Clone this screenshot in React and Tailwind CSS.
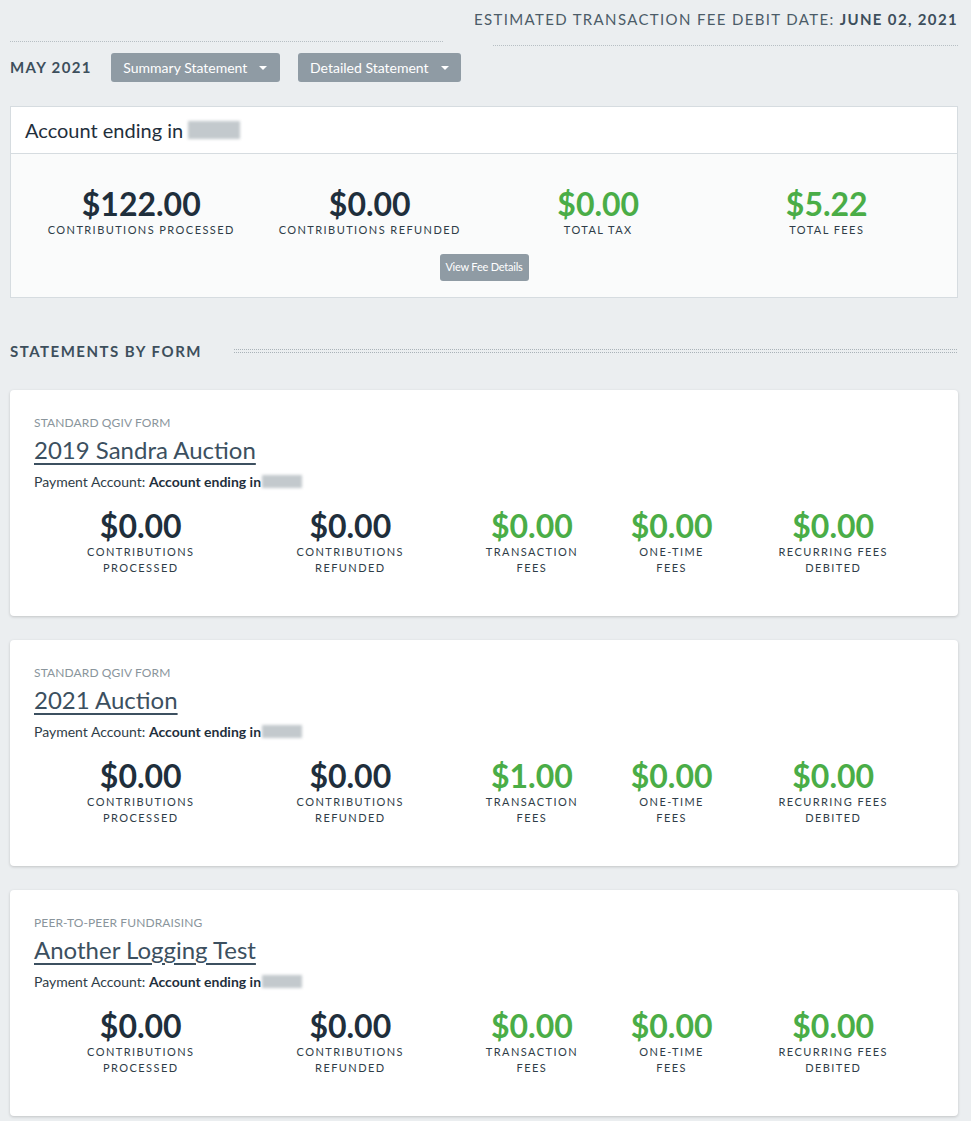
import React from "react";

const forms = [
  {
    type: "STANDARD QGIV FORM",
    title: "2019 Sandra Auction",
    stats: ["$0.00", "$0.00", "$0.00", "$0.00", "$0.00"],
  },
  {
    type: "STANDARD QGIV FORM",
    title: "2021 Auction",
    stats: ["$0.00", "$0.00", "$1.00", "$0.00", "$0.00"],
  },
  {
    type: "PEER-TO-PEER FUNDRAISING",
    title: "Another Logging Test",
    stats: ["$0.00", "$0.00", "$0.00", "$0.00", "$0.00"],
  },
];

const formCols = [
  { w: "w-[214px]", l1: "CONTRIBUTIONS", l2: "PROCESSED", green: false },
  { w: "w-[206px]", l1: "CONTRIBUTIONS", l2: "REFUNDED", green: false },
  { w: "w-[158px]", l1: "TRANSACTION", l2: "FEES", green: true },
  { w: "w-[122px]", l1: "ONE-TIME", l2: "FEES", green: true },
  { w: "w-[202px]", l1: "RECURRING FEES", l2: "DEBITED", green: true },
];

function Caret() {
  return <span className="ml-3 inline-block border-x-[4px] border-t-[4px] border-x-transparent border-t-white" />;
}

function Blur({ className }) {
  return <span className={"inline-block bg-[#c3c9cd] blur-[1.5px] " + className} />;
}

export default function App() {
  return (
    <div className="min-h-[1121px] bg-[#ebeef0] pl-[10px] pr-[13px] pb-2 text-[#2f3d48]" style={{ fontFamily: "Lato, 'Open Sans', sans-serif" }}>
      {/* top header */}
      <div className="flex items-end justify-between pt-[9px]">
        <div className="mb-[4px] w-[433px] border-t border-dotted border-[#b7bfc4]" />
        <div className="flex flex-col items-end">
          <div className="whitespace-nowrap text-[15px] leading-[20px] tracking-[0.09em] text-[#4b5c68]">
            ESTIMATED TRANSACTION FEE DEBIT DATE: <span className="font-bold text-[#3d4f5c]">JUNE 02, 2021</span>
          </div>
          <div className="mt-[16px] w-[465px] border-t border-dotted border-[#b7bfc4]" />
        </div>
      </div>

      <div className="mt-[7px] flex items-center">
        <span className="text-[15px] font-bold tracking-[0.09em] text-[#3d4f5c]">MAY 2021</span>
        <button className="ml-[19px] flex h-[29px] w-[169px] items-center justify-center rounded-[3px] bg-[#8f9ba4] text-[14px] text-white">
          Summary Statement <Caret />
        </button>
        <button className="ml-[18px] flex h-[29px] w-[163px] items-center justify-center rounded-[3px] bg-[#8f9ba4] text-[14px] text-white">
          Detailed Statement <Caret />
        </button>
      </div>

      {/* account card */}
      <div className="mt-[24px] border border-[#d6dce0] bg-[#fafbfb]">
        <div className="flex h-[47px] items-center border-b border-[#d6dce0] bg-white px-[14px] text-[20px] text-[#1f2f3c]">
          Account ending in <Blur className="ml-[5px] h-[18px] w-[52px]" />
        </div>
        <div className="px-[16px] pt-[32px] pb-[16px]">
          <div className="grid grid-cols-4">
            {[
              ["$122.00", "CONTRIBUTIONS PROCESSED", false],
              ["$0.00", "CONTRIBUTIONS REFUNDED", false],
              ["$0.00", "TOTAL TAX", true],
              ["$5.22", "TOTAL FEES", true],
            ].map(([v, l, g]) => (
              <div key={l} className="flex flex-col items-center">
                <div className={"text-[32px] font-bold leading-[36px] " + (g ? "text-[#4aad47]" : "text-[#1f2f3c]")}>{v}</div>
                <div className="mt-[1px] text-[11px] leading-[14px] tracking-[0.13em] text-[#2f3d48]">{l}</div>
              </div>
            ))}
          </div>
          <div className="mt-[17px] flex justify-center">
            <button className="h-[27px] w-[89px] rounded-[3px] bg-[#8f9ba4] text-[11px] tracking-[-0.02em] text-white">View Fee Details</button>
          </div>
        </div>
      </div>

      {/* statements by form */}
      <div className="mt-[42px] flex items-center">
        <span className="text-[15px] font-bold tracking-[0.1em] text-[#3d4f5c]">STATEMENTS BY FORM</span>
        <div className="ml-[32px] mr-[1px] h-[4px] flex-1 border-y border-dotted border-[#a9b2b8]" />
      </div>

      <div className="mt-[27px] flex flex-col gap-[24px]">
        {forms.map((f) => (
          <div key={f.title} className="h-[226px] rounded-[4px] bg-white px-[24px] pt-[26px] shadow-[0_1px_3px_rgba(0,0,0,0.18)]">
            <div className="text-[12px] leading-[14px] tracking-[0.01em] text-[#8a959c]">{f.type}</div>
            <div className="mt-[6px] text-[24px] leading-[28px] text-[#3c5060] underline decoration-[2px] underline-offset-[4px]">{f.title}</div>
            <div className="mt-[10px] flex items-center text-[14px] leading-[16px] text-[#2f3d48]">
              Payment Account:&nbsp;<span className="font-bold text-[#1f2f3c]">Account ending in</span>
              <Blur className="ml-[1px] h-[13px] w-[40px]" />
            </div>
            <div className="mt-[18px] flex">
              {formCols.map((c, i) => (
                <div key={i} className={"flex flex-col items-center " + c.w}>
                  <div className={"text-[32px] font-bold leading-[36px] " + (c.green ? "text-[#4aad47]" : "text-[#1f2f3c]")}>{f.stats[i]}</div>
                  <div className="text-[11px] leading-[16px] tracking-[0.13em] text-[#2f3d48]">{c.l1}</div>
                  <div className="text-[11px] leading-[16px] tracking-[0.13em] text-[#2f3d48]">{c.l2}</div>
                </div>
              ))}
            </div>
          </div>
        ))}
      </div>
    </div>
  );
}
